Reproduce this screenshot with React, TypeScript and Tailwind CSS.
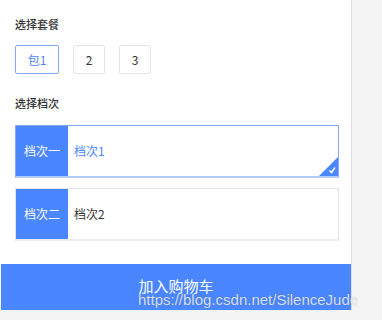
const font = { fontFamily: '"Noto Sans CJK SC", "Liberation Sans", sans-serif' };

const packages = ['包1', '2', '3'];
const levels = [
  { label: '档次一', name: '档次1', active: true },
  { label: '档次二', name: '档次2', active: false },
];

function LevelCard({ label, name, active }: { label: string; name: string; active: boolean }) {
  return (
    <div
      className={`relative flex h-[53px] w-[324px] border ${
        active ? 'border-[#86a8f7] border-b-2 border-b-[#b3ccff]' : 'border-[#e3e3e3] border-b-2 border-b-[#ececec]'
      }`}
    >
      <div className="flex w-[52px] shrink-0 items-center justify-center bg-[#4a86ff] text-[12px] text-white">
        {label}
      </div>
      <div className={`flex items-center pl-[6px] text-[12px] ${active ? 'text-[#4a86ff]' : 'text-[#333]'}`}>
        {name}
      </div>
      {active && (
        <div className="absolute bottom-0 right-0 h-[19px] w-[19px]">
          <svg viewBox="0 0 19 19" className="h-full w-full">
            <polygon points="19,0 19,19 0,19" fill="#4a86ff" />
            <path d="M10.5 13.5 L12.5 15.5 L16 10.5" stroke="#fff" strokeWidth="1.6" fill="none" />
          </svg>
        </div>
      )}
    </div>
  );
}

export default function App() {
  return (
    <div className="relative flex h-[320px] w-[382px] bg-[#f4f4f4]" style={font}>
      <div className="flex h-[310px] w-[352px] flex-col border-r border-[#dedede] bg-white">
        <div className="pl-[15px]">
          <div className="pt-[16px] text-[11px] font-medium leading-[16px] text-[#333]">选择套餐</div>
          <div className="mt-[13px] flex gap-[14px]">
            {packages.map((p, i) => (
              <div
                key={p}
                className={`flex h-[29px] items-center justify-center rounded-[2px] border text-[12px] ${
                  i === 0 ? 'w-[44px] border-[#86a8f7] text-[#4a86ff]' : 'w-[32px] border-[#e3e3e3] text-[#333]'
                }`}
              >
                {p}
              </div>
            ))}
          </div>
          <div className="mt-[21px] text-[11px] font-medium leading-[16px] text-[#333]">选择档次</div>
          <div className="mt-[14px] flex flex-col gap-[10px]">
            {levels.map((l) => (
              <LevelCard key={l.label} {...l} />
            ))}
          </div>
        </div>
        <div className="relative mt-auto ml-[1px] flex h-[46px] justify-center bg-[#4a86ff] pt-[12px] text-[15px] leading-[20px] text-white">
          加入购物车
        </div>
      </div>
      {/* csdn watermark */}
      <span
        className="absolute left-[138px] top-[290px] z-10 whitespace-nowrap text-[15px] leading-[20px] text-white/80 [text-shadow:0_0_1px_rgba(0,0,0,0.35)]"
        style={{ fontFamily: '"Liberation Sans", Arial, sans-serif' }}
      >
        https://blog.csdn.net/SilenceJude
      </span>
    </div>
  );
}
